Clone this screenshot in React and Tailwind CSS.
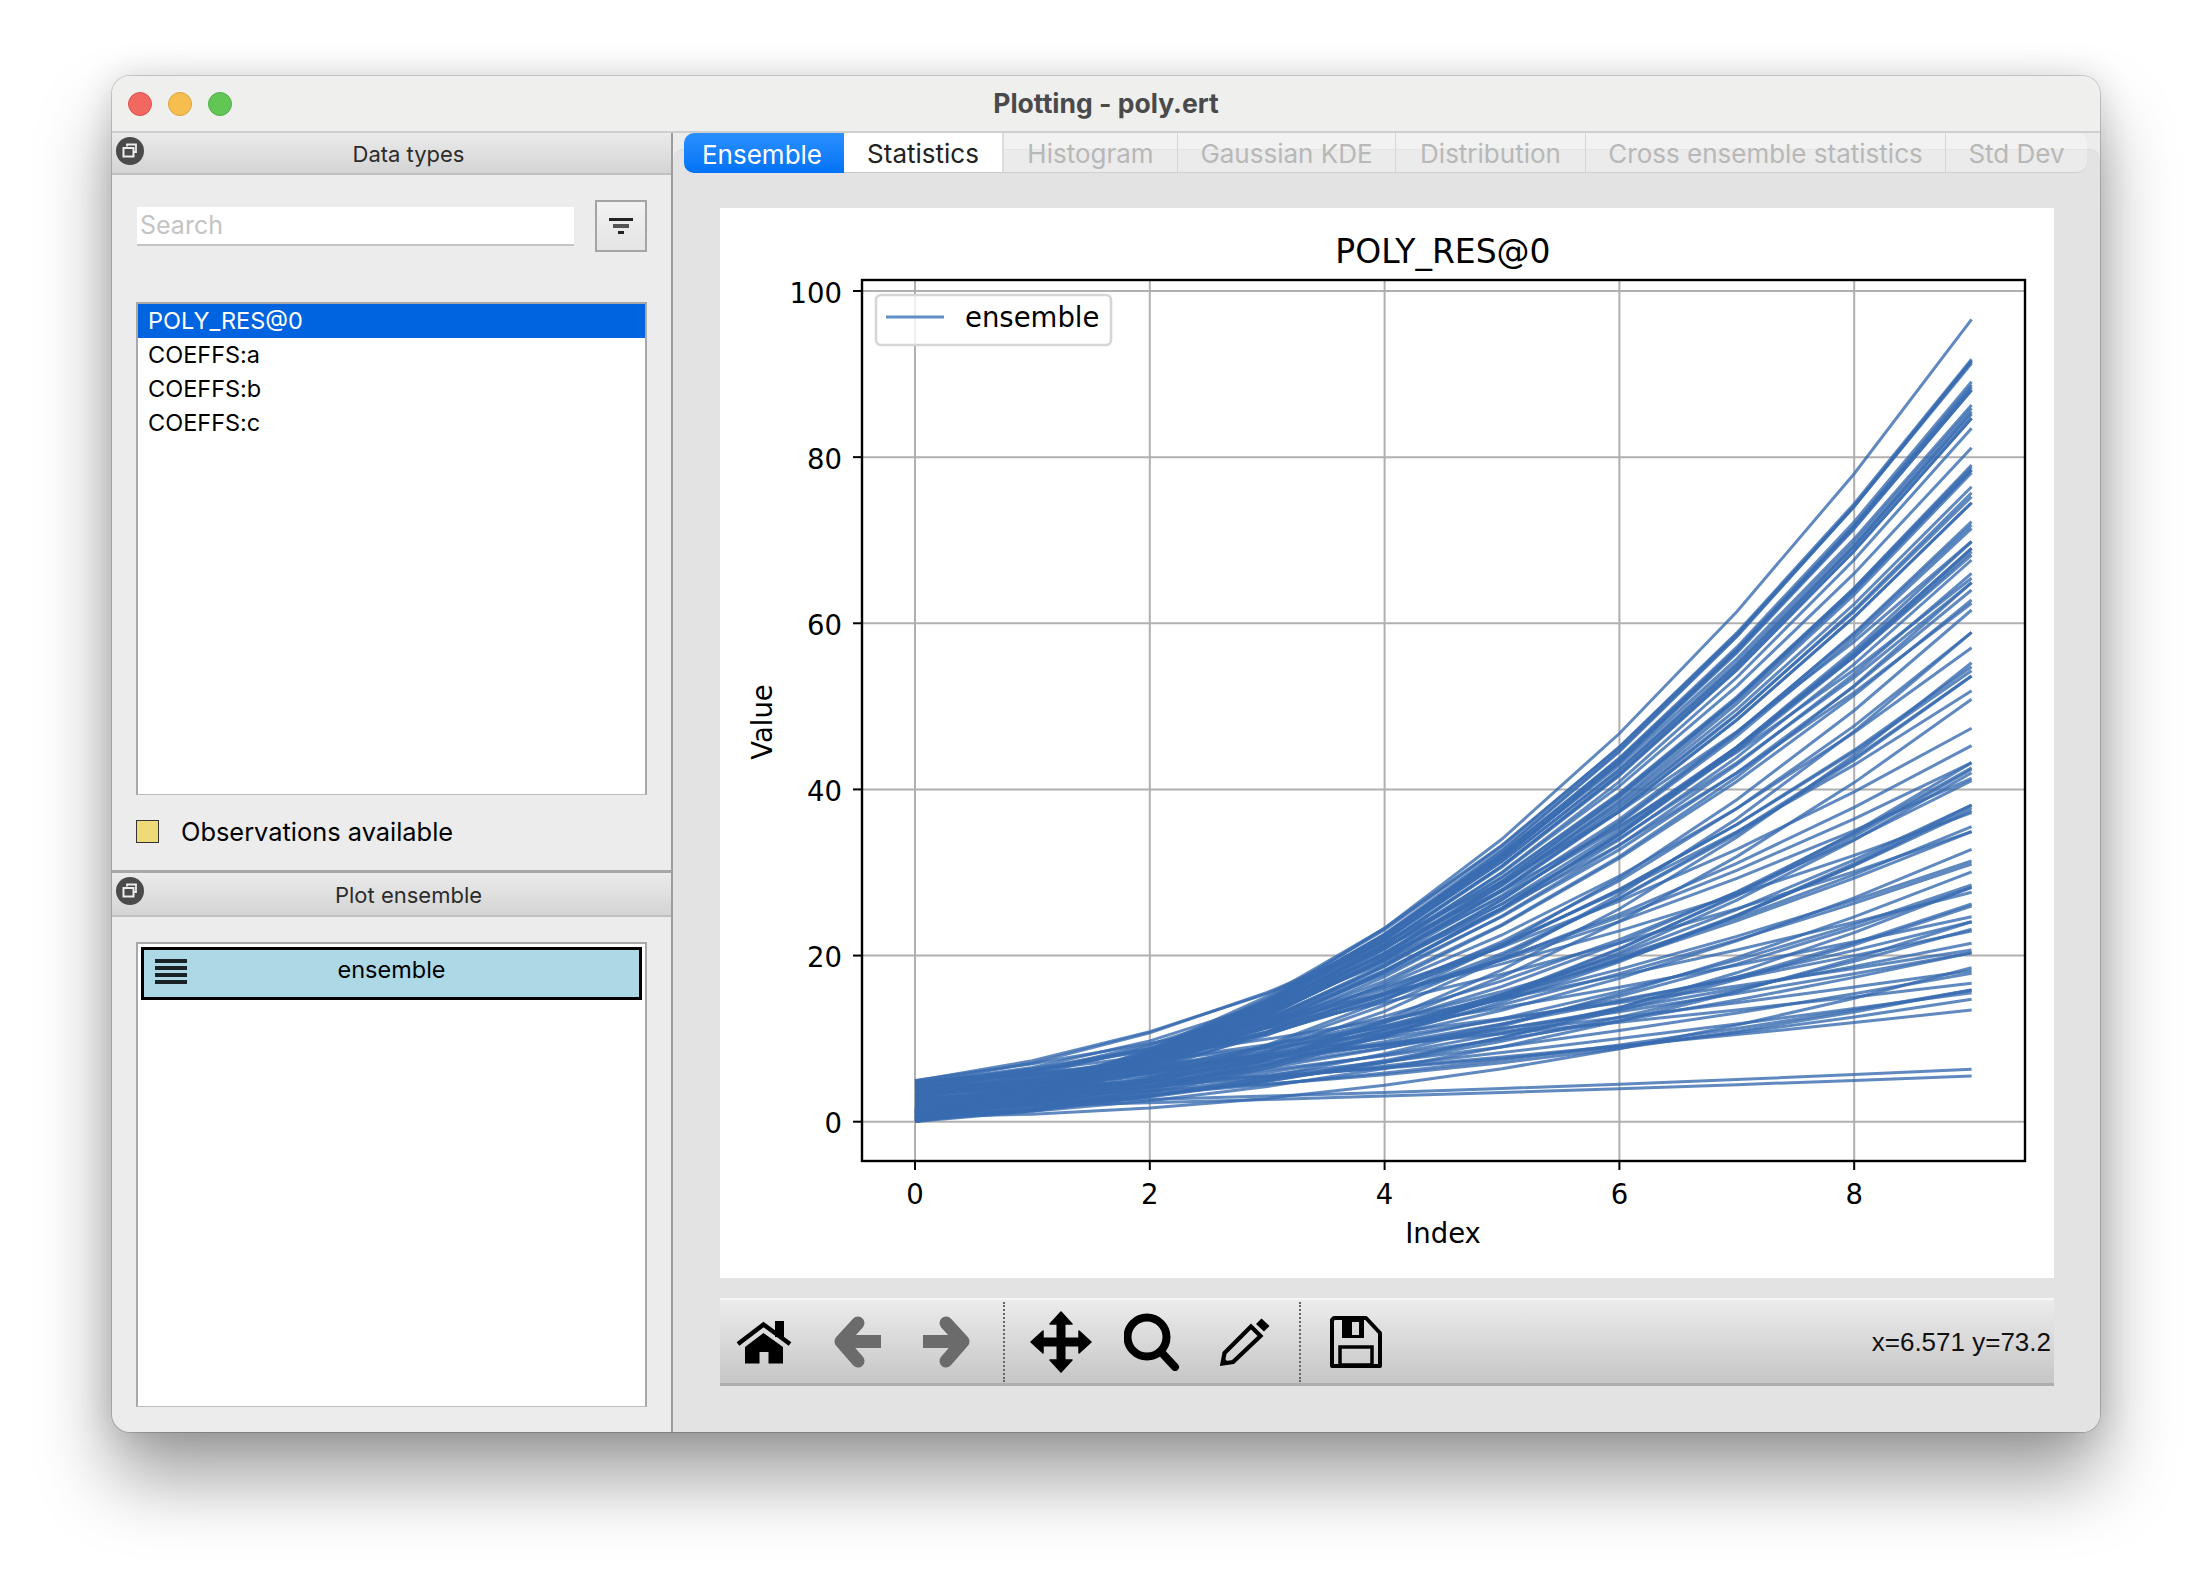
const uiFont = 'font-["Inter","Noto_Sans",sans-serif]';

// where each realisation ends at x=9, read off the chart as pixel rows
const endRows = [
  319.3, 359.3, 361, 363.3, 381.7, 385, 387.3, 390, 405, 408.3, 411.7, 414, 418.3, 428.3, 447.7,
  465, 467.3, 470, 472.7, 486.7, 492.7, 496.7, 502.7, 521.7, 525, 528.3, 541.7, 548.3, 551.7, 555,
  560, 573.3, 582.7, 590, 600, 603.3, 610, 632.3, 647.7, 662.7, 666.7, 670.7, 676, 690.7, 699.3,
  728.3, 745.7, 762.7, 767.7, 772.7, 778.3, 780.7, 805, 807.7, 810.7, 812.7, 826.7, 831.7, 849.3,
  861, 864, 885, 887.3, 892.3, 904, 906, 916.7, 921.7, 929.3, 931, 943.3, 950, 952.7, 967.7, 970.7,
  973.3, 983.3, 990, 992.7, 999.3, 1010,
];

const px = (x) => 195 + x * 117.4;
const py = (v) => 913.7 - v * 8.307;

function seeded(seed) {
  let s = seed;
  return () => {
    s = (s + 0x6d2b79f5) | 0;
    let t = Math.imul(s ^ (s >>> 15), 1 | s);
    t = (t + Math.imul(t ^ (t >>> 7), 61 | t)) ^ t;
    return ((t ^ (t >>> 14)) >>> 0) / 4294967296;
  };
}

function buildLines() {
  const rnd = seeded(17);
  const out = [];
  const add = (a, b, c) => {
    const pts = [];
    for (let x = 0; x < 10; x++) pts.push(`${px(x).toFixed(1)},${py(a * x * x + b * x + c).toFixed(1)}`);
    out.push(pts.join(' '));
  };
  // every fifth end is used twice, to get to about 100 lines
  const rows = [...endRows, ...endRows.filter((_, i) => i % 5 === 2)];
  rows.forEach((row, i) => {
    const end = (1121.7 - row) / 8.307;
    let c = 5 * ((i * 0.618) % 1);
    let b = rnd() * 2;
    if (9 * b + c > end * 0.8) b = Math.max(0, (end * 0.8 - c) / 9);
    let a = (end - 9 * b - c) / 81;
    if (a > 0.72) {
      b = 1.9;
      c *= 0.3;
      a = (end - 17.1 - c) / 81;
    }
    add(a, b, c);
  });
  // the two that stay almost flat
  add(0.0126, 0.32, 1.6);
  add(0.02, 0.3, 2);
  // bottom and top of the bundle near the start
  add(0.26, 1, 0.02);
  add(0.42, 0.9, 0.3);
  add(0.536, 1.9, 4.9);
  add(0.6, 1.85, 4.6);
  return out;
}

const lines = buildLines();

const tabs = [
  { label: 'Ensemble', cls: 'w-[160px] rounded-l-[10px] bg-gradient-to-b from-[#2a90ff] to-[#0072f5] pr-[4px] text-white' },
  { label: 'Statistics', cls: 'w-[160px] bg-white text-[#222] border-r-2 border-[#dcdcdc] border-b border-b-[#c8c8c8]' },
  { label: 'Histogram', cls: 'w-[174px] text-[#b8b8b8] bg-white/30 border-r border-[#d6d6d6] border-b border-b-[#d0d0d0]' },
  { label: 'Gaussian KDE', cls: 'w-[218px] text-[#b8b8b8] bg-white/30 border-r border-[#d6d6d6] border-b border-b-[#d0d0d0]' },
  { label: 'Distribution', cls: 'w-[190px] text-[#b8b8b8] bg-white/30 border-r border-[#d6d6d6] border-b border-b-[#d0d0d0]' },
  { label: 'Cross ensemble statistics', cls: 'w-[360px] text-[#b8b8b8] bg-white/30 border-r border-[#d6d6d6] border-b border-b-[#d0d0d0]' },
  { label: 'Std Dev', cls: 'w-[141px] rounded-r-[10px] text-[#b8b8b8] bg-white/30 border-b border-[#d0d0d0]' },
];

const FloatIcon = () => (
  <svg width="28" height="28" viewBox="0 0 28 28" className="shrink-0">
    <circle cx="14" cy="14" r="14" fill="#4a4a4a" />
    <path d="M11 9.5V7.5H20V15H17.5" fill="none" stroke="#eee" strokeWidth="1.8" />
    <rect x="7.5" y="11" width="10" height="8.5" fill="none" stroke="#eee" strokeWidth="2" />
  </svg>
);

const DockTitle = ({ children, className }) => (
  <div className={`relative flex items-center justify-center border-b-2 border-[#c0c0c0] bg-gradient-to-b from-[#ebebeb] to-[#d4d4d4] ${className}`}>
    <div className="absolute top-[4px] left-[4px]">
      <FloatIcon />
    </div>
    <span className="pt-[2px] pl-[34px] text-[22px] text-[#2c2c2c]">{children}</span>
  </div>
);

const HomeIcon = () => (
  <svg width="56" height="44" viewBox="0 0 56 44" className="ml-[16px] shrink-0">
    <rect x="39" y="1" width="9" height="16" fill="#000" />
    <path d="M2 24 L27.5 4.5 L54 24" fill="none" stroke="#000" strokeWidth="4.5" />
    <path d="M9 27 L27.5 13 L47 27 V43.5 H32.5 V32 H23.5 V43.5 H9 Z" fill="#000" />
  </svg>
);

const BackIcon = ({ className }) => (
  <svg width="50" height="54" viewBox="0 0 50 54" className={`shrink-0 ${className}`}>
    <path d="M26 8 L9 26.5 L26 46" fill="none" stroke="#6b6b6b" strokeWidth="13" strokeLinecap="round" strokeLinejoin="round" />
    <path d="M9 26.5 H49" fill="none" stroke="#6b6b6b" strokeWidth="13" />
  </svg>
);

const MoveIcon = () => (
  <svg width="62" height="62" viewBox="0 0 62 62" className="ml-[25px] shrink-0">
    <path d="M26.5 10 H35.5 V26.5 H52 V35.5 H35.5 V52 H26.5 V35.5 H10 V26.5 H26.5 Z" fill="#000" />
    <path d="M31 1 L42 13 H20 Z M31 61 L42 49 H20 Z M1 31 L13 20 V42 Z M61 31 L49 20 V42 Z" fill="#000" stroke="#000" strokeWidth="1.5" strokeLinejoin="round" />
  </svg>
);

const ZoomIcon = () => (
  <svg width="56" height="58" viewBox="0 0 56 58" className="ml-[32px] shrink-0">
    <circle cx="23" cy="24" r="19.5" fill="none" stroke="#000" strokeWidth="8" />
    <path d="M38 40 L51 54" fill="none" stroke="#000" strokeWidth="8" strokeLinecap="round" />
  </svg>
);

const PencilIcon = () => (
  <svg width="50" height="48" viewBox="0 0 50 48" className="ml-[40px] shrink-0">
    <path d="M2.5 45.5 L4.5 35 L31 8.5 L40.5 18 L13 44 Z" fill="none" stroke="#000" strokeWidth="4.2" />
    <path d="M2 46 L3 39 L9 45 Z" fill="#000" />
    <path d="M36 6 L41.5 0.5 L49.5 8 L44 13.5 Z" fill="#000" />
  </svg>
);

const SaveIcon = () => (
  <svg width="52" height="52" viewBox="0 0 52 52" className="ml-[29px] shrink-0">
    <path d="M4 2 H36 L50 17 V50 H2 V4 Z" fill="none" stroke="#000" strokeWidth="4" strokeLinejoin="round" />
    <path d="M12 3 H34 V22 H12 Z" fill="#000" />
    <rect x="22" y="6" width="7" height="13" fill="#d8d8d8" />
    <rect x="10" y="31" width="32" height="18" fill="none" stroke="#000" strokeWidth="3.5" />
  </svg>
);

const Dots = ({ className }) => (
  <div className={`h-[80px] w-0 shrink-0 border-l-2 border-dotted border-[#666] ${className}`} />
);

const Chart = () => {
  const tickText = 'font-["DejaVu_Sans",sans-serif] text-[27.5px]';
  return (
    <svg width="1334" height="1070" viewBox="0 0 1334 1070" className="block bg-white">
      {[0, 2, 4, 6, 8].map((x) => (
        <g key={x}>
          <line x1={px(x)} x2={px(x)} y1="72" y2="953" stroke="#b0b0b0" strokeWidth="2" />
          <line x1={px(x)} x2={px(x)} y1="953" y2="962" stroke="#000" strokeWidth="2" />
          <text x={px(x)} y="995.5" textAnchor="middle" className={tickText}>{x}</text>
        </g>
      ))}
      {[0, 20, 40, 60, 80, 100].map((v) => (
        <g key={v}>
          <line x1="142" x2="1304" y1={py(v)} y2={py(v)} stroke="#b0b0b0" strokeWidth="2" />
          <line x1="133" x2="142" y1={py(v)} y2={py(v)} stroke="#000" strokeWidth="2" />
          <text x="122" y={py(v) + 11.5} textAnchor="end" className={tickText}>{v}</text>
        </g>
      ))}
      {lines.map((pts, i) => (
        <polyline key={i} points={pts} fill="none" stroke="#386cb0" strokeOpacity="0.8" strokeWidth="3" />
      ))}
      <rect x="142" y="72" width="1163" height="881" fill="none" stroke="#000" strokeWidth="2.4" />
      <rect x="156" y="87" width="235" height="50" rx="5" fill="#fff" fillOpacity="0.8" stroke="#d6d6d6" strokeWidth="2.6" />
      <line x1="166" x2="224" y1="109" y2="109" stroke="#618ec4" strokeWidth="2.8" />
      <text x="245" y="119" className={tickText}>ensemble</text>
      <text x="723" y="55" textAnchor="middle" className='font-["DejaVu_Sans",sans-serif] text-[33px]'>POLY_RES@0</text>
      <text x="723" y="1034.5" textAnchor="middle" className={tickText}>Index</text>
      <text transform="translate(52 514) rotate(-90)" textAnchor="middle" className={tickText}>Value</text>
    </svg>
  );
};

export default function App() {
  return (
    <div className={`min-h-screen w-full bg-white pt-[76px] pl-[112px] ${uiFont}`}>
      <div className="flex h-[1356px] w-[1988px] flex-col overflow-hidden rounded-[18px] bg-[#ececec] shadow-[0_46px_75px_rgba(0,0,0,0.38),0_0_34px_rgba(0,0,0,0.14),0_0_0_1px_rgba(0,0,0,0.16)]">
        {/* title bar */}
        <div className="relative flex h-[57px] shrink-0 items-center justify-center border-b-2 border-[#cfcfcf] bg-[#efefee]">
          <div className="absolute top-[16px] left-[16px] flex gap-[16px]">
            <div className="h-[24px] w-[24px] rounded-full border border-[#d9534c] bg-[#f0685f]" />
            <div className="h-[24px] w-[24px] rounded-full border border-[#dca13c] bg-[#f6bd4f]" />
            <div className="h-[24px] w-[24px] rounded-full border border-[#4fae47] bg-[#62c655]" />
          </div>
          <span className="text-[26.5px] font-bold text-[#4a4a4a]">Plotting - poly.ert</span>
        </div>

        <div className="flex min-h-0 flex-1">
          {/* left docks */}
          <div className="flex w-[561px] shrink-0 flex-col border-r-2 border-[#9c9c9c]">
            <DockTitle className="h-[42px]">Data types</DockTitle>
            <div className="flex h-[698px] flex-col border-b-[3px] border-[#a8a8a8] px-[24px] pt-[25px]">
              <div className="flex items-center justify-between">
                <div className="ml-[1px] flex h-[39px] w-[437px] items-center border-b-2 border-[#c4c4c4] bg-white pt-[2px] pl-[3px] text-[25px] text-[#c4c4c4]">
                  Search
                </div>
                <div className="flex h-[52px] w-[52px] flex-col items-center justify-center gap-[3px] border-2 border-[#a4a4a4] bg-gradient-to-b from-[#f2f2f2] to-[#e4e4e4]">
                  <div className="h-[3px] w-[24px] bg-[#222]" />
                  <div className="h-[4px] w-[16px] bg-[#555]" />
                  <div className="h-[3px] w-[6px] bg-[#222]" />
                </div>
              </div>
              <div className="mt-[50px] h-[493px] w-[511px] border-2 border-b border-[#a8a8a8] border-b-[#bdbdbd] bg-white">
                <div className="flex h-[34px] items-center bg-[#0064e1] pl-[10px] text-[23.5px] text-white">POLY_RES@0</div>
                {['COEFFS:a', 'COEFFS:b', 'COEFFS:c'].map((name) => (
                  <div key={name} className="flex h-[34px] items-center pl-[10px] text-[23.5px] text-black">
                    {name}
                  </div>
                ))}
              </div>
              <div className="mt-[25px] flex items-center">
                <div className="h-[23px] w-[23px] border border-[#333] bg-[#eeda76]" />
                <span className="ml-[22px] text-[25.4px] leading-[23px] text-black">Observations available</span>
              </div>
            </div>
            <DockTitle className="h-[44px]">Plot ensemble</DockTitle>
            <div className="px-[24px] pt-[25px]">
              <div className="h-[465px] w-[511px] border-2 border-b border-[#a8a8a8] border-b-[#bdbdbd] bg-white px-[3px] pt-[3px]">
                <div className="relative flex h-[53px] items-center justify-center border-[3px] border-black bg-[#add8e6] pb-[8px] text-[23.5px] text-black">
                  <div className="absolute top-[9px] left-[11px] flex flex-col gap-[3px]">
                    <div className="h-[4px] w-[32px] bg-[#1a2226]" />
                    <div className="h-[4px] w-[32px] bg-[#1a2226]" />
                    <div className="h-[4px] w-[32px] bg-[#1a2226]" />
                    <div className="h-[4px] w-[32px] bg-[#1a2226]" />
                  </div>
                  ensemble
                </div>
              </div>
            </div>
          </div>

          {/* plot area */}
          <div className="min-w-0 flex-1 pt-[16px]">
            <div className="h-full rounded-t-[10px] border-t border-[#d8d8d8] bg-[#e3e3e3]">
              <div className="-mt-[17px] ml-[11px] flex h-[40px]">
                {tabs.map((tab) => (
                  <div key={tab.label} className={`flex items-center justify-center pt-[2px] text-[26px] ${tab.cls}`}>
                    {tab.label}
                  </div>
                ))}
              </div>
              <div className="mt-[35px] ml-[47px] w-[1334px]">
                <Chart />
                <div className="mt-[20px] flex h-[88px] items-center border-t-2 border-b-[3px] border-t-[#f6f6f6] border-b-[#adadad] bg-gradient-to-b from-[#ececec] to-[#c6c6c6]">
                  <HomeIcon />
                  <BackIcon className="ml-[40px]" />
                  <BackIcon className="ml-[40px] -scale-x-100" />
                  <Dots className="ml-[31px]" />
                  <MoveIcon />
                  <ZoomIcon />
                  <PencilIcon />
                  <Dots className="ml-[29px]" />
                  <SaveIcon />
                  <span className='ml-auto pr-[3px] pt-[2px] font-["Liberation_Sans",sans-serif] text-[26px] text-[#111]'>x=6.571 y=73.2</span>
                </div>
              </div>
            </div>
          </div>
        </div>
      </div>
    </div>
  );
}
